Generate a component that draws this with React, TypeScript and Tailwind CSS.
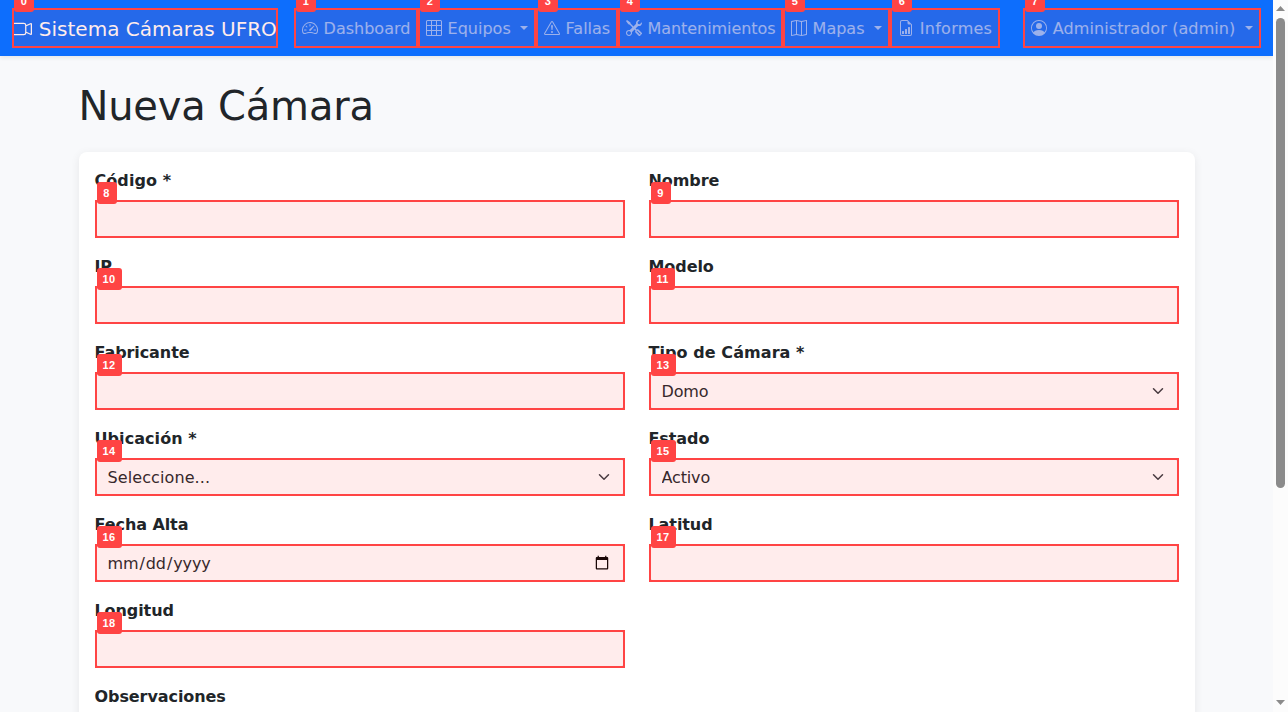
import type { ReactNode } from "react";
import {
  BsCameraVideo,
  BsExclamationTriangle,
  BsFileEarmarkBarGraph,
  BsGrid3X3,
  BsMap,
  BsPersonCircle,
  BsSpeedometer2,
  BsTools,
} from "react-icons/bs";

function Marker({ n }: { n: number }) {
  const width = n < 10 ? "w-5" : n === 11 ? "w-6" : "w-[25px]";
  return (
    <span className="pointer-events-none absolute inset-0 z-10 border-2 border-[#ff4444] bg-[#ff4444]/10">
      <span
        className={`absolute -top-5 left-0 flex h-[22px] items-center justify-center rounded-[3px] bg-[#ff4444] font-['Liberation_Sans',sans-serif] text-[11px] leading-none font-bold tracking-[0.3px] text-white ${width}`}
      >
        {n}
      </span>
    </span>
  );
}

const iconClass = "mr-[0.5px] inline-block size-[1em] align-[-0.125em]";

function NavItem({
  n,
  icon,
  label,
  width,
  tracking = "tracking-normal",
  caret = false,
}: {
  n: number;
  icon: ReactNode;
  label: string;
  width: string;
  tracking?: string;
  caret?: boolean;
}) {
  return (
    <a
      className={`relative block h-10 shrink-0 px-2 pt-2 leading-[26px] whitespace-nowrap text-white/55 ${width} ${tracking}`}
    >
      {icon} {label}
      {caret && (
        <>
          {" "}
          <span className="ml-[0.255em] inline-block border-x-[0.3em] border-t-[0.3em] border-x-transparent border-t-current align-[0.255em]" />
        </>
      )}
      <Marker n={n} />
    </a>
  );
}

const controlClass =
  "block h-[38px] w-full appearance-none rounded-md border border-[#dee2e6] bg-white px-3 pt-[7px] pb-[5px] text-base text-[#212529]";

function Field({
  n,
  label,
  type = "text",
  option,
}: {
  n: number;
  label: string;
  type?: "text" | "date";
  option?: string;
}) {
  const labelTracking = label.endsWith("*") ? "tracking-[0.07px]" : "tracking-[-0.08px]";
  const optionTracking = option === "Seleccione..." ? "tracking-[0.1px]" : "tracking-[-0.15px]";
  return (
    <div>
      <label className={`mb-1.5 block leading-[26px] font-semibold ${labelTracking}`}>{label}</label>
      <div className="relative h-[38px]">
        {option ? (
          <>
            <select className={`${controlClass} ${optionTracking}`} defaultValue={option}>
              <option>{option}</option>
            </select>
            <svg
              className="pointer-events-none absolute top-[13px] right-[13px] h-3 w-4"
              viewBox="0 0 16 16"
              fill="none"
              stroke="#343a40"
              strokeWidth="2"
              strokeLinecap="round"
              strokeLinejoin="round"
            >
              <path d="m2 5 6 6 6-6" />
            </svg>
          </>
        ) : (
          <input
            type={type}
            className={`${controlClass} -indent-px tracking-[-0.1px] [&::-webkit-calendar-picker-indicator]:-translate-y-px`}
          />
        )}
        <Marker n={n} />
      </div>
    </div>
  );
}

function Scrollbar() {
  return (
    <div className="flex h-full w-[15px] shrink-0 flex-col items-center bg-[#fcfcfc]">
      <svg className="h-[18px] w-[15px] shrink-0" viewBox="0 0 15 18" fill="#8b8b8b">
        <path d="M3 11 7.5 6 12 11Z" />
      </svg>
      <div className="h-[470px] w-[9px] rounded-full bg-[#8b8b8b]" />
      <svg className="mt-auto h-[18px] w-[15px] shrink-0" viewBox="0 0 15 18" fill="#8b8b8b">
        <path d="M3 6h9L7.5 11Z" />
      </svg>
    </div>
  );
}

export default function App() {
  return (
    <div className="flex h-[712px] w-[1288px] overflow-hidden bg-[#f8f9fb] font-['DejaVu_Sans',sans-serif] text-base leading-6 text-[#212529]">
      <div className="h-full min-w-0 flex-1 overflow-hidden">
        <nav className="flex h-14 items-center bg-[#0d6efd] px-3 shadow-[0_2px_4px_rgba(0,0,0,0.075)]">
          <a className="relative mr-4 block h-10 w-[266px] shrink-0 pt-[5px] text-xl leading-8 whitespace-nowrap text-white">
            <BsCameraVideo className={iconClass} /> Sistema Cámaras UFRO
            <Marker n={0} />
          </a>
          <NavItem n={1} icon={<BsSpeedometer2 className={iconClass} />} label="Dashboard" width="w-[124px]" />
          <NavItem n={2} icon={<BsGrid3X3 className={iconClass} />} label="Equipos" width="w-[118px]" caret />
          <NavItem n={3} icon={<BsExclamationTriangle className={iconClass} />} label="Fallas" width="w-[82px]" />
          <NavItem
            n={4}
            icon={<BsTools className={iconClass} />}
            label="Mantenimientos"
            width="w-[165px]"
            tracking="tracking-[-0.06px]"
          />
          <NavItem n={5} icon={<BsMap className={iconClass} />} label="Mapas" width="w-[107px]" caret />
          <NavItem
            n={6}
            icon={<BsFileEarmarkBarGraph className={iconClass} />}
            label="Informes"
            width="w-[110px]"
            tracking="tracking-[0.25px]"
          />
          <div className="ml-auto">
            <NavItem
              n={7}
              icon={<BsPersonCircle className={iconClass} />}
              label="Administrador (admin)"
              width="w-[238px]"
              tracking="tracking-[0.1px]"
              caret
            />
          </div>
        </nav>
        <main className="mx-auto w-[1140px] px-3 pt-6">
          <h1 className="mb-5 text-[40px] leading-[52px] font-medium tracking-[-0.2px]">Nueva Cámara</h1>
          <form className="h-[900px] rounded-lg bg-white p-4 shadow-[0_2px_10px_rgba(0,0,0,0.075)]">
            <div className="grid grid-cols-2 gap-x-6 gap-y-4">
              <Field n={8} label="Código *" />
              <Field n={9} label="Nombre" />
              <Field n={10} label="IP" />
              <Field n={11} label="Modelo" />
              <Field n={12} label="Fabricante" />
              <Field n={13} label="Tipo de Cámara *" option="Domo" />
              <Field n={14} label="Ubicación *" option="Seleccione..." />
              <Field n={15} label="Estado" option="Activo" />
              <Field n={16} label="Fecha Alta" type="date" />
              <Field n={17} label="Latitud" />
              <Field n={18} label="Longitud" />
            </div>
            <label className="mt-4 block leading-[26px] font-semibold tracking-[-0.08px]">Observaciones</label>
          </form>
        </main>
      </div>
      <Scrollbar />
    </div>
  );
}
